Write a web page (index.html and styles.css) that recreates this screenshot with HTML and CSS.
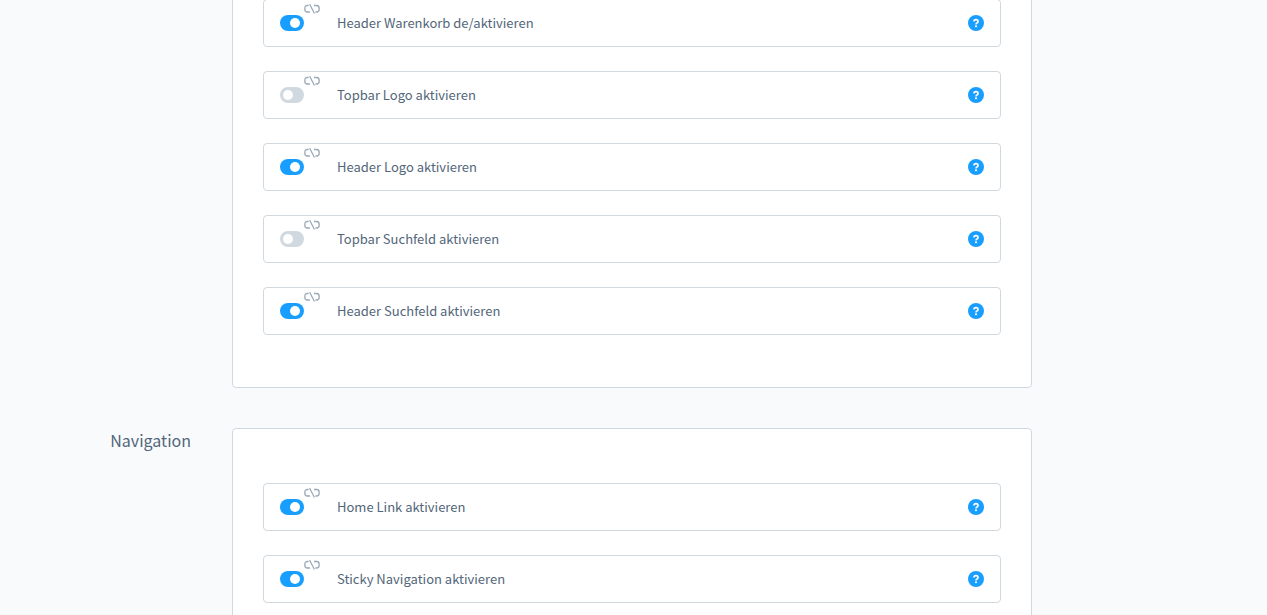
FILE: index.html
```
<!DOCTYPE html>
<html lang="de">
<head>
<meta charset="utf-8">
<title>Theme-Konfiguration</title>
<link rel="stylesheet" href="styles.css">
</head>
<body>
<svg class="sprite" aria-hidden="true">
  <symbol id="unlink" viewBox="0 0 16 10">
    <path d="M4.6 1.5H3.4Q.9 1.5.9 4V5.5Q.9 8 3.4 8H6M10 1.5H12.6Q15.1 1.5 15.1 4V5.5Q15.1 8 12.6 8H11.4" fill="none" stroke="currentColor" stroke-width="1.3"/>
    <path d="M5.6 0L10.4 9.6" fill="none" stroke="currentColor" stroke-width="1.2"/>
  </symbol>
  <symbol id="help" viewBox="0 0 16 16">
    <circle cx="8" cy="8" r="8" fill="currentColor"/>
    <path d="M6 6.4Q6 4.6 8 4.6T10 6.4Q10 7.4 9 7.9T8 9.4" fill="none" stroke="#fff" stroke-width="1.7"/>
    <rect x="7.1" y="10.4" width="1.8" height="1.7" fill="#fff"/>
  </symbol>
</svg>
<main class="page">
  <section class="group">
    <div class="card">
      <div class="field"><input class="switch" type="checkbox" id="f1" checked><svg class="unlink"><use href="#unlink"/></svg><label class="label" for="f1">Header Warenkorb de/aktivieren</label><button class="help" type="button" aria-label="Hilfe"><svg><use href="#help"/></svg></button></div>
      <div class="field"><input class="switch" type="checkbox" id="f2"><svg class="unlink"><use href="#unlink"/></svg><label class="label" for="f2">Topbar Logo aktivieren</label><button class="help" type="button" aria-label="Hilfe"><svg><use href="#help"/></svg></button></div>
      <div class="field"><input class="switch" type="checkbox" id="f3" checked><svg class="unlink"><use href="#unlink"/></svg><label class="label" for="f3">Header Logo aktivieren</label><button class="help" type="button" aria-label="Hilfe"><svg><use href="#help"/></svg></button></div>
      <div class="field"><input class="switch" type="checkbox" id="f4"><svg class="unlink"><use href="#unlink"/></svg><label class="label" for="f4">Topbar Suchfeld aktivieren</label><button class="help" type="button" aria-label="Hilfe"><svg><use href="#help"/></svg></button></div>
      <div class="field"><input class="switch" type="checkbox" id="f5" checked><svg class="unlink"><use href="#unlink"/></svg><label class="label" for="f5">Header Suchfeld aktivieren</label><button class="help" type="button" aria-label="Hilfe"><svg><use href="#help"/></svg></button></div>
    </div>
  </section>
  <section class="group">
    <h2 class="title">Navigation</h2>
    <div class="card">
      <div class="field"><input class="switch" type="checkbox" id="f6" checked><svg class="unlink"><use href="#unlink"/></svg><label class="label" for="f6">Home Link aktivieren</label><button class="help" type="button" aria-label="Hilfe"><svg><use href="#help"/></svg></button></div>
      <div class="field"><input class="switch" type="checkbox" id="f7" checked><svg class="unlink"><use href="#unlink"/></svg><label class="label" for="f7">Sticky Navigation aktivieren</label><button class="help" type="button" aria-label="Hilfe"><svg><use href="#help"/></svg></button></div>
    </div>
  </section>
</main>
</body>
</html>
```
FILE: styles.css
```
* { box-sizing: border-box; }

body {
  margin: 0;
  height: 100vh;
  overflow: hidden;
  background: #f9fafc;
  color: #52667a;
  font-family: "Noto Sans CJK SC", "Open Sans", sans-serif;
}

.sprite { display: none; }

/* The list is scrolled to the end of the first group. */
.page {
  display: flex;
  flex-direction: column;
  gap: 40px;
  margin-top: -56px;
  padding-right: 3px;
}

.group {
  display: grid;
  grid-template-columns: 1fr minmax(0, 800px) 1fr;
}

.title {
  grid-column: 1;
  margin: 0;
  padding-right: 41px;
  text-align: right;
  font-size: 16px;
  line-height: 24px;
  font-weight: 400;
}

.card {
  grid-column: 2;
  display: flex;
  flex-direction: column;
  gap: 24px;
  padding: 54px 30px 52px;
  border: 1px solid #d1d9e0;
  border-radius: 4px;
  background: #fff;
}

.field {
  display: flex;
  align-items: center;
  height: 48px;
  padding: 0 16px;
  border: 1px solid #d1d9e0;
  border-radius: 4px;
}

.switch {
  appearance: none;
  flex: none;
  display: flex;
  align-items: center;
  width: 24px;
  height: 16px;
  margin: 0;
  padding: 0 4px 0 3px;
  border-radius: 8px;
  background: #d1d9e0;
}

.switch::before {
  content: "";
  width: 10px;
  height: 10px;
  border-radius: 50%;
  background: #fff;
}

.switch:checked {
  justify-content: flex-end;
  background: #189eff;
}

.unlink {
  flex: none;
  align-self: flex-start;
  width: 16px;
  height: 10px;
  margin-top: 4px;
  color: #9aa8b8;
}

.label {
  flex: 1;
  padding-left: 17px;
  font-size: 13px;
  line-height: 20px;
}

.help {
  flex: none;
  display: flex;
  width: 16px;
  height: 16px;
  padding: 0;
  border: 0;
  background: none;
  color: #189eff;
}

.help svg { width: 16px; height: 16px; }
```
